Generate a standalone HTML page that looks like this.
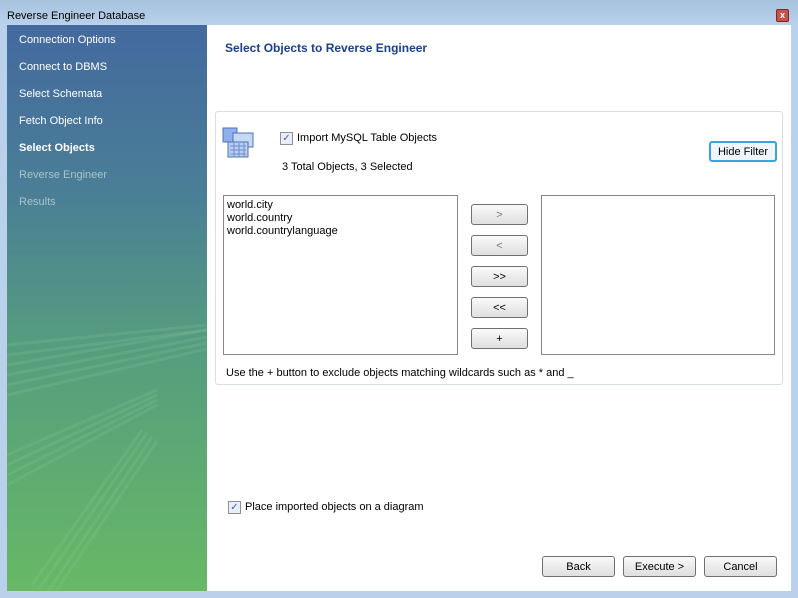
<!DOCTYPE html><html><head><style>
body{margin:0;width:798px;height:598px;position:relative;background:#b9d1ea;font-family:"Liberation Sans",sans-serif;font-size:11px;overflow:hidden}
.a{position:absolute}
.btn{position:absolute;height:19px;border:1px solid #707070;border-radius:3px;background:linear-gradient(#fafafa,#ececec 50%,#dfdfdf);text-align:center;line-height:21px;color:#000;font-size:11px}
.side div{position:absolute;left:12px;color:#fff;font-size:11px}
</style></head><body>
<div class="a" style="left:0;top:0;width:798px;height:25px;background:linear-gradient(#a7c2de,#b9d1ea)"></div>
<div class="a" style="left:7px;top:10px;font-size:11px">Reverse Engineer Database</div>
<div class="a" style="left:776px;top:9px;width:11px;height:11px;background:#c9524a;border:1px solid #7a2a24;border-radius:2px;color:#fff;font-size:9px;line-height:11px;text-align:center;font-weight:bold">x</div>
<div class="a side" style="left:7px;top:25px;width:200px;height:566px;background:linear-gradient(#44699f 0%,#4a7f96 30%,#559b80 55%,#68b866 100%)">
<svg class="a" style="left:0;top:0" width="200" height="566"><g stroke="#8fd09a" stroke-opacity=".18" stroke-width="3" fill="none">
<path d="M0 320 L200 300"/><path d="M0 330 L200 305"/>
<path d="M0 340 L200 305"/><path d="M0 350 L200 312"/><path d="M0 360 L200 318"/><path d="M0 370 L200 324"/>
<path d="M0 430 L150 365"/><path d="M0 440 L150 370"/><path d="M0 450 L150 375"/><path d="M0 460 L150 380"/>
<path d="M25 560 L135 405"/><path d="M32 564 L140 408"/><path d="M40 568 L145 412"/><path d="M48 568 L150 416"/></g></svg>
<div style="top:9px">Connection Options</div><div style="top:36px">Connect to DBMS</div><div style="top:63px">Select Schemata</div><div style="top:90px">Fetch Object Info</div>
<div style="top:117px;font-weight:bold">Select Objects</div><div style="top:144px;color:#a8c4c8">Reverse Engineer</div><div style="top:171px;color:#a8c4c8">Results</div></div>
<div class="a" style="left:207px;top:25px;width:584px;height:566px;background:#fff"></div>
<div class="a" style="left:225px;top:41px;font-weight:bold;color:#1a3f8f;font-size:12px">Select Objects to Reverse Engineer</div>
<div class="a" style="left:215px;top:111px;width:566px;height:272px;border:1px solid #d5dfe5;border-radius:3px"></div>
<svg class="a" style="left:222px;top:127px" width="34" height="32"><rect x="1" y="1" width="14" height="14" fill="#8fb0ea" stroke="#4f70b8"/><rect x="11" y="6" width="20" height="14" fill="#c5d8f4" stroke="#4f70b8"/><rect x="6" y="15" width="20" height="15" fill="#b8cdf2" stroke="#4f70b8"/><g stroke="#6d8fd0"><path d="M8 19h16M8 23h16M8 27h16M12 16v14M17 16v14M22 16v14"/></g></svg>
<div class="a" style="left:280px;top:132px;width:11px;height:11px;border:1px solid #8f8f8f;background:#e8eef8;font-size:10px;line-height:11px;text-align:center;color:#4a5f97">✓</div>
<div class="a" style="left:297px;top:132px">Import MySQL Table Objects</div>
<div class="a" style="left:282px;top:161px">3 Total Objects, 3 Selected</div>
<div class="btn" style="left:709px;top:141px;width:64px;border:2px solid #3ca4d8;height:17px;line-height:19px;background:#eef6fb">Hide Filter</div>
<div class="a" style="left:223px;top:195px;width:233px;height:158px;border:1px solid #828790"><div style="padding:3px 3px;line-height:13px">world.city<br>world.country<br>world.countrylanguage</div></div>
<div class="a" style="left:541px;top:195px;width:232px;height:158px;border:1px solid #828790"></div>
<div class="btn" style="left:471px;top:204px;width:55px;color:#777">&gt;</div>
<div class="btn" style="left:471px;top:235px;width:55px;color:#777">&lt;</div>
<div class="btn" style="left:471px;top:266px;width:55px">&gt;&gt;</div>
<div class="btn" style="left:471px;top:297px;width:55px">&lt;&lt;</div>
<div class="btn" style="left:471px;top:328px;width:55px">+</div>
<div class="a" style="left:226px;top:367px">Use the + button to exclude objects matching wildcards such as * and _</div>
<div class="a" style="left:228px;top:501px;width:11px;height:11px;border:1px solid #8f8f8f;background:#e8eef8;font-size:10px;line-height:11px;text-align:center;color:#4a5f97">✓</div>
<div class="a" style="left:245px;top:501px">Place imported objects on a diagram</div>
<div class="btn" style="left:542px;top:556px;width:71px">Back</div>
<div class="btn" style="left:623px;top:556px;width:71px">Execute &gt;</div>
<div class="btn" style="left:704px;top:556px;width:71px">Cancel</div>
</body></html>
